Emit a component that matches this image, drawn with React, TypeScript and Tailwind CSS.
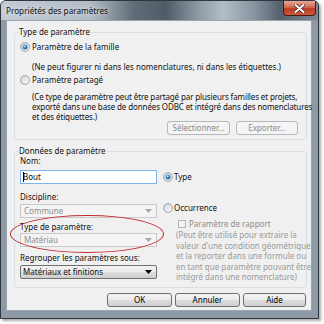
import React from "react";

function Radio({ checked }: { checked?: boolean }) {
  return (
    <svg width="10" height="10" viewBox="0 0 10 10" className="shrink-0">
      <defs>
        <linearGradient id="rbg" x1="0" y1="0" x2="1" y2="1">
          <stop offset="0" stopColor="#cfd2d6" />
          <stop offset="1" stopColor="#ffffff" />
        </linearGradient>
        <radialGradient id="rdot" cx="0.4" cy="0.35" r="0.7">
          <stop offset="0" stopColor="#b9e0fb" />
          <stop offset="0.5" stopColor="#3b8ccc" />
          <stop offset="1" stopColor="#17457a" />
        </radialGradient>
      </defs>
      <circle cx="5" cy="5" r="4.4" fill="url(#rbg)" stroke="#8a8f96" strokeWidth="0.8" />
      {checked && <circle cx="5" cy="5" r="2.5" fill="url(#rdot)" />}
    </svg>
  );
}

function Arrow({ dark }: { dark?: boolean }) {
  return (
    <svg width="7" height="4" viewBox="0 0 7 4" className="shrink-0">
      <path d="M0 0 L7 0 L3.5 4 Z" fill={dark ? "#000000" : "#a8a8a8"} />
    </svg>
  );
}

function Btn({ children, w, disabled }: { children: React.ReactNode; w: string; disabled?: boolean }) {
  return (
    <div
      className={
        disabled
          ? `${w} h-[14px] rounded-[3px] border border-[#b5b9bd] bg-[#f4f4f4] text-[#8a8a8a] flex items-center justify-center leading-[12px]`
          : `${w} h-[14px] rounded-[3px] border border-[#707070] bg-[linear-gradient(180deg,#f2f2f2_0%,#ebebeb_50%,#dddddd_51%,#cfcfcf_100%)] text-black flex items-center justify-center leading-[12px]`
      }
    >
      {children}
    </div>
  );
}

export default function App() {
  return (
    <div className="w-[324px] h-[324px] bg-white font-['Noto_Sans',sans-serif] text-[8px] text-[#111] whitespace-nowrap">
      <div className="relative w-[319px] h-[319px] rounded-t-[6px] border border-[#2f363d] bg-[#8d9aa6] shadow-[2px_2px_3px_rgba(0,0,0,0.35)] flex flex-col">
        {/* title bar */}
        <div className="h-[19px] shrink-0 flex justify-between rounded-t-[5px] bg-[linear-gradient(90deg,#c3ccd4_0%,#b3bdc6_28%,#5f6c78_42%,#4f5c68_52%,#8c98a3_62%,#b3bdc5_70%,#8793a0_80%,#55626e_88%,#7d8995_100%)]">
          <div className="pl-[5px] pt-[4px] text-[8.2px] leading-[12px] [text-shadow:0_0_5px_rgba(255,255,255,0.95)]">
            Propriétés des paramètres
          </div>
          <div className="mr-[2px] w-[33px] h-[15px] rounded-b-[4px] border border-t-0 border-[#4a1810] bg-[linear-gradient(180deg,#e9a896_0%,#d06a52_45%,#b93a22_55%,#d05a3a_100%)] flex items-center justify-center">
            <svg width="11" height="9" viewBox="0 0 11 9">
              <path d="M1.5 1 L9.5 8 M9.5 1 L1.5 8" stroke="#3a1a14" strokeWidth="3.2" strokeLinecap="round" />
              <path d="M1.5 1 L9.5 8 M9.5 1 L1.5 8" stroke="#ffffff" strokeWidth="2" strokeLinecap="round" />
            </svg>
          </div>
        </div>

        {/* content */}
        <div className="ml-[5px] w-[306px] h-[291px] border border-[#9aa5b0] bg-[#f0f0f0] flex flex-col">
          {/* Group 1 */}
          <div className="ml-[7px] mt-[11px] w-[293px] h-[108px] shrink-0 border border-[#d5dfe5] rounded-[3px] flex flex-col">
            <span className="-mt-[6px] ml-[3px] px-[1px] w-fit h-[10px] leading-[10px] bg-[#f0f0f0]">Type de paramètre</span>
            <div className="mt-[4px] pl-[5px] h-[12px] flex items-center gap-[2px]">
              <Radio checked />
              <span className="leading-[12px]">Paramètre de la famille</span>
            </div>
            <div className="mt-[8px] pl-[17px] h-[12px] leading-[12px]">
              (Ne peut figurer ni dans les nomenclatures, ni dans les étiquettes.)
            </div>
            <div className="mt-[1px] pl-[5px] h-[12px] flex items-center gap-[2px]">
              <Radio />
              <span className="leading-[12px]">Paramètre partagé</span>
            </div>
            <div className="mt-[6px] pl-[17px] leading-[10px] tracking-[-0.12px]">
              <div>(Ce type de paramètre peut être partagé par plusieurs familles et projets,</div>
              <div>exporté dans une base de données ODBC et intégré dans des nomenclatures</div>
              <div>et des étiquettes.)</div>
            </div>
            <div className="-mt-px pr-[8px] flex justify-end gap-[6px]">
              <Btn w="w-[63px]" disabled>Sélectionner...</Btn>
              <Btn w="w-[62px]" disabled>Exporter...</Btn>
            </div>
          </div>

          {/* Group 2 */}
          <div className="ml-[7px] mt-[11px] w-[293px] h-[137px] shrink-0 border border-[#d5dfe5] rounded-[3px] flex flex-col">
            <span className="-mt-[6px] ml-[3px] px-[1px] w-fit h-[10px] leading-[10px] bg-[#f0f0f0]">Données de paramètre</span>
            <div className="flex">
              {/* left column */}
              <div className="ml-[5px] w-[137px] shrink-0 flex flex-col">
                <div className="h-[10px] leading-[10px]">Nom:</div>
                <div className="mt-[4px] h-[14px] border border-[#7eb4ea] bg-white flex items-center pl-[2px] leading-[12px]">
                  <span className="w-px h-[10px] bg-black -mr-px" />
                  Bout
                </div>
                <div className="mt-[7px] h-[12px] leading-[12px]">Discipline:</div>
                <div className="mt-[1px] h-[14px] border border-[#c9c9c9] bg-[#f4f4f4] flex items-center justify-between pl-[3px] pr-[4px] text-[#8d8d8d] leading-[12px]">
                  <span>Commune</span>
                  <Arrow />
                </div>
                <div className="mt-[3px] h-[12px] leading-[12px]">Type de paramètre:</div>
                <div className="h-[14px] border border-[#c9c9c9] bg-[#f4f4f4] flex items-center justify-between pl-[3px] pr-[4px] text-[#8d8d8d] leading-[12px]">
                  <span>Matériau</span>
                  <Arrow />
                </div>
                <div className="mt-[5px] h-[12px] leading-[12px]">Regrouper les paramètres sous:</div>
                <div className="mt-[1px] h-[14px] rounded-[2px] border border-[#707070] bg-[linear-gradient(180deg,#f2f2f2_0%,#ebebeb_50%,#dddddd_51%,#cfcfcf_100%)] flex items-center justify-between pl-[2px] pr-[4px] leading-[12px]">
                  <span>Matériaux et finitions</span>
                  <Arrow dark />
                </div>
              </div>
              {/* right column */}
              <div className="ml-[6px] flex flex-col">
                <div className="mt-[15px] h-[12px] flex items-center gap-[1px]">
                  <Radio checked />
                  <span className="leading-[12px]">Type</span>
                </div>
                <div className="mt-[19px] h-[12px] flex items-center gap-[1px]">
                  <Radio />
                  <span className="leading-[12px]">Occurrence</span>
                </div>
                <div className="mt-[4px] ml-[15px] h-[12px] flex items-center gap-[3px]">
                  <span className="w-[8px] h-[8px] border border-[#b5b5b5] bg-[#f4f4f4] shrink-0" />
                  <span className="leading-[12px] text-[#8d8d8d]">Paramètre de rapport</span>
                </div>
                <div className="ml-[13px] leading-[10.5px] text-[#9a9a9a]">
                  <div>(Peut être utilisé pour extraire la</div>
                  <div>valeur d'une condition géométrique</div>
                  <div>et la reporter dans une formule ou</div>
                  <div>en tant que paramètre pouvant être</div>
                  <div>intégré dans une nomenclature)</div>
                </div>
              </div>
            </div>
          </div>

          {/* bottom buttons */}
          <div className="mt-[5px] pr-[5px] flex justify-end gap-[3px]">
            <Btn w="w-[65px]">OK</Btn>
            <Btn w="w-[65px]">Annuler</Btn>
            <Btn w="w-[63px]">Aide</Btn>
          </div>
        </div>

        {/* red annotation ellipse */}
        <div className="absolute left-[9px] top-[214px] w-[154px] h-[38px] rounded-[50%] border-[1.5px] border-[#c4262e] pointer-events-none" />
      </div>
    </div>
  );
}
